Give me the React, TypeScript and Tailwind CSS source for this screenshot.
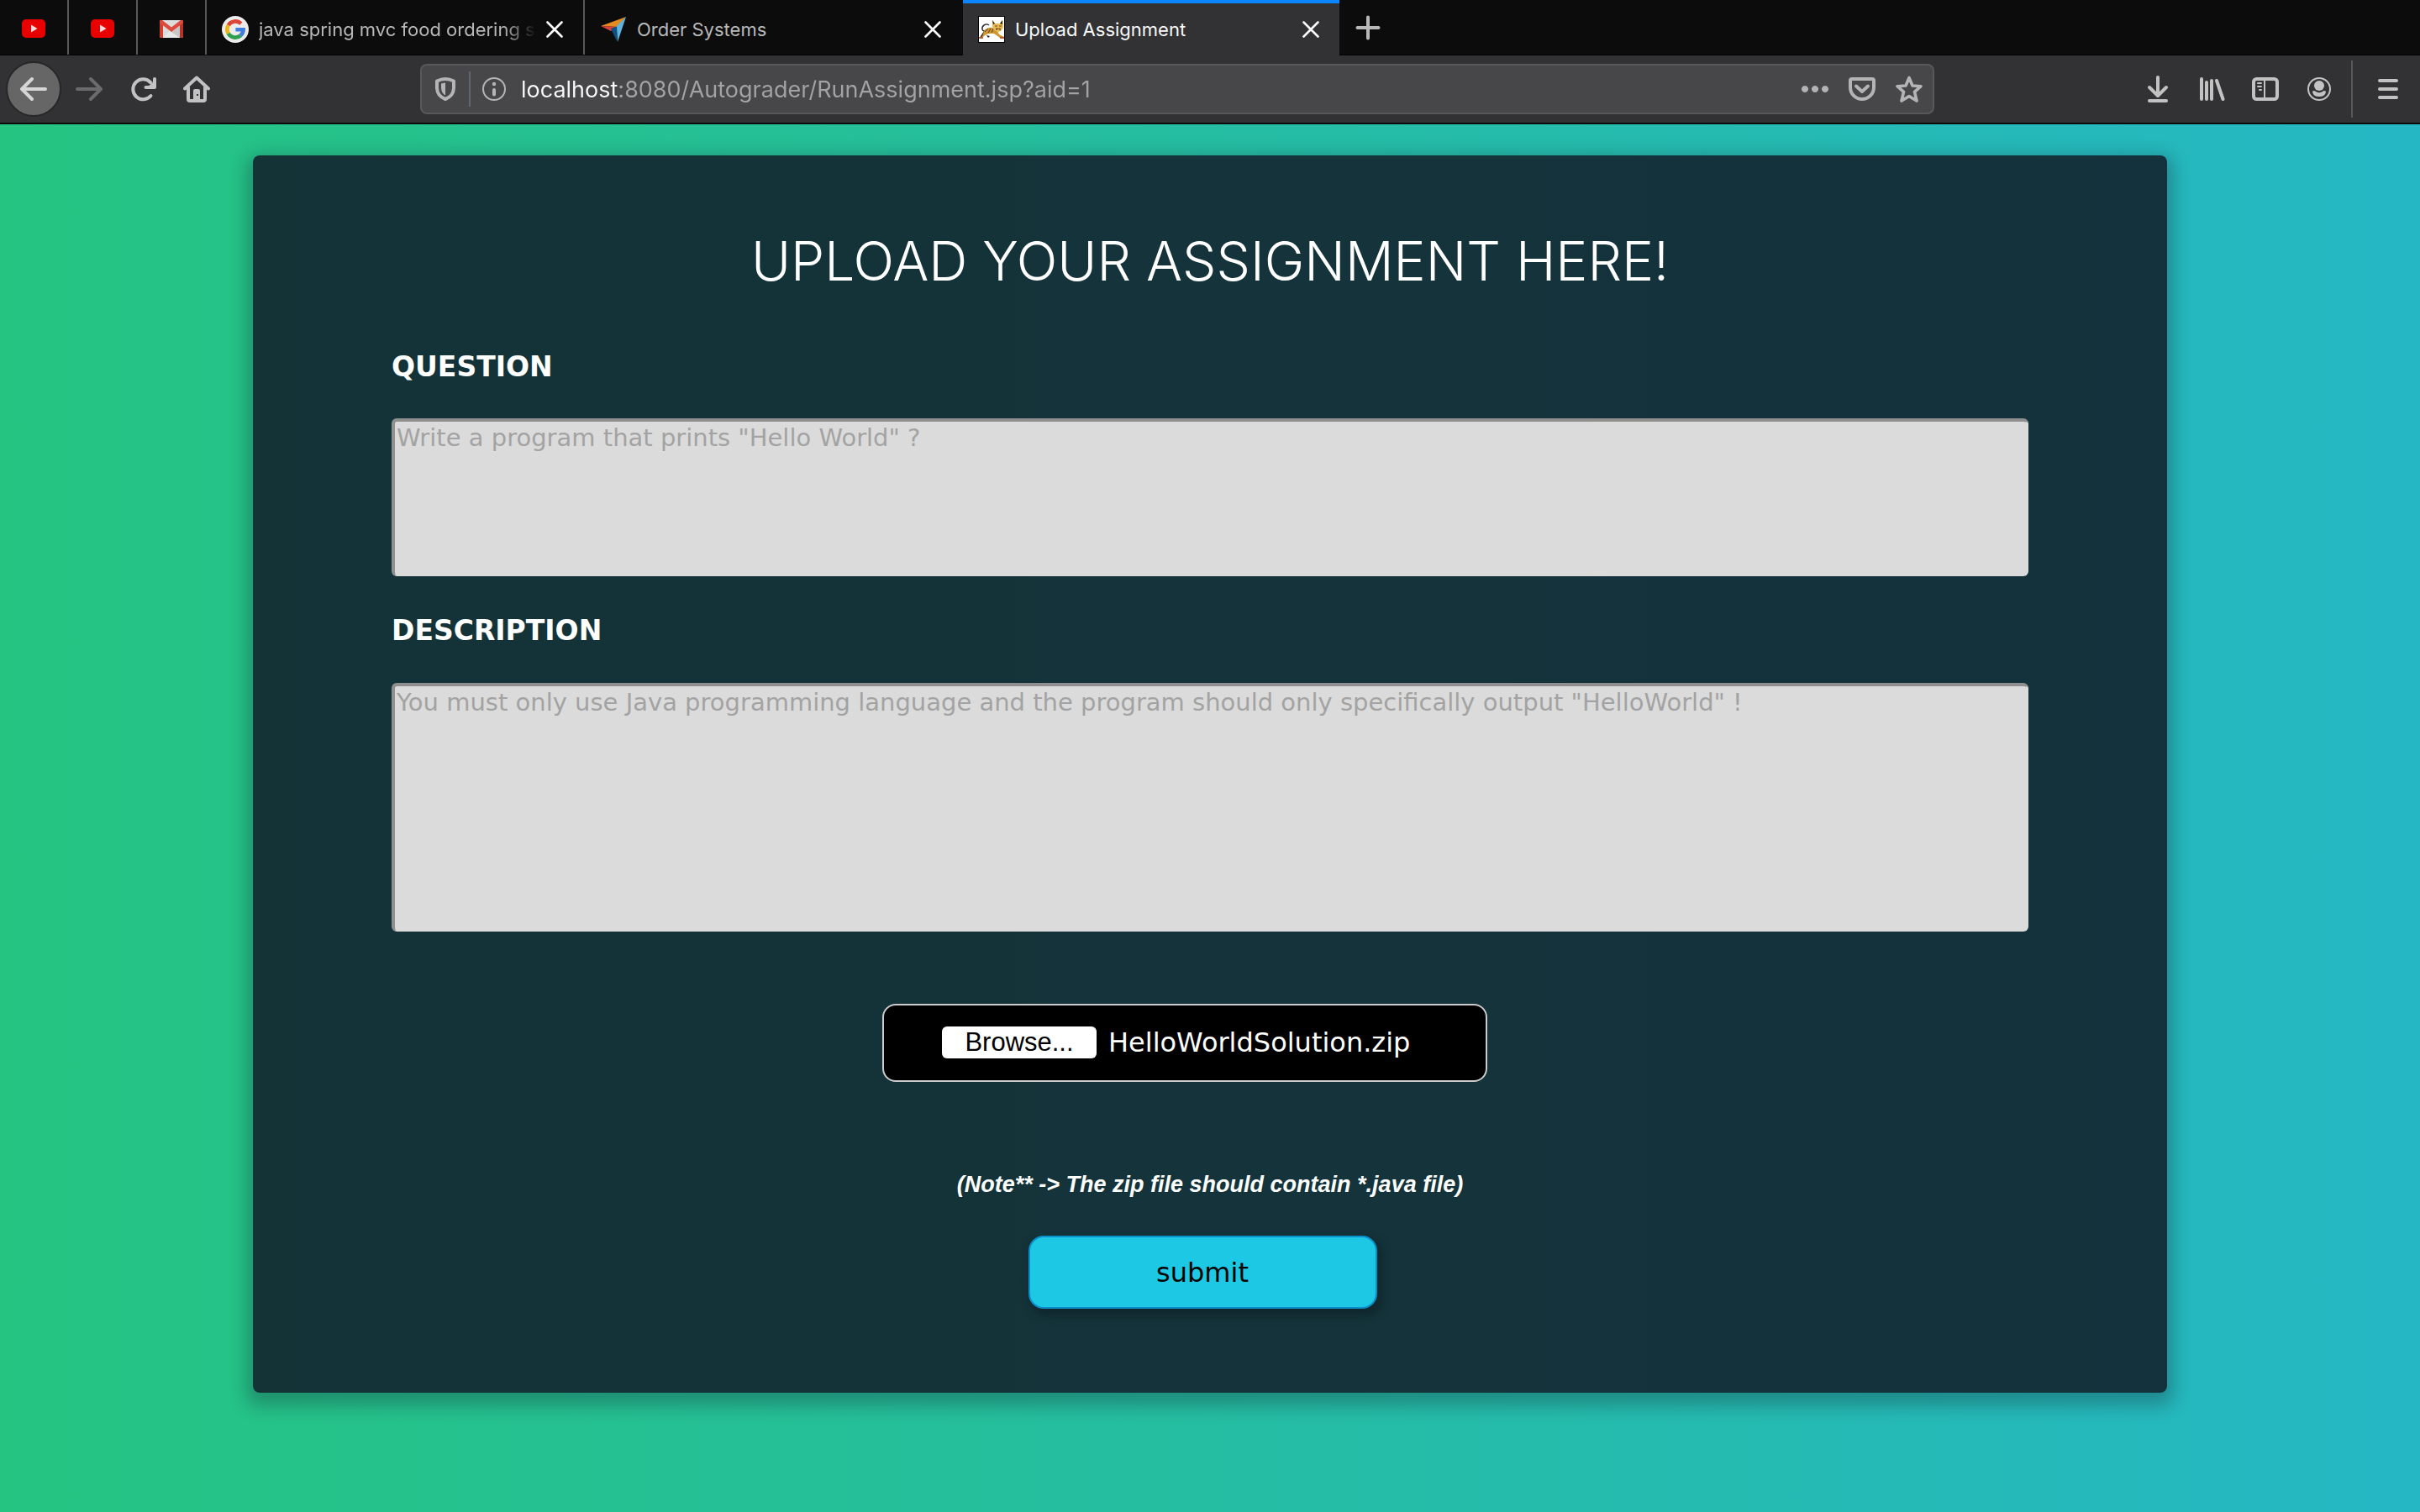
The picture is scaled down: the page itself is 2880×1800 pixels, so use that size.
import { useRef, useState } from "react";
import type { ReactNode } from "react";

function Icon({ children, className = "" }: { children: ReactNode; className?: string }) {
  return (
    <svg
      viewBox="0 0 32 32"
      className={`size-8 shrink-0 ${className}`}
      fill="none"
      stroke="currentColor"
      strokeWidth="4"
      strokeLinecap="round"
      strokeLinejoin="round"
      aria-hidden="true"
    >
      {children}
    </svg>
  );
}

function YouTubeIcon() {
  return (
    <svg viewBox="0 0 28 22" className="h-[22px] w-7" aria-hidden="true">
      <rect width="28" height="22" rx="5" fill="#e80000" />
      <path d="M11 6.5 18.5 11 11 15.5Z" fill="#f4dede" />
    </svg>
  );
}

function GmailIcon() {
  return (
    <svg viewBox="0 0 28 22" className="h-[22px] w-7" aria-hidden="true">
      <rect x="0" y="1" width="28" height="21" rx="2" fill="#dcdcdc" />
      <path d="M4 22 14 12 24 22Z" fill="#e9e9e7" />
      <path d="M14 15 24 6V22Z" fill="#c9c7c5" />
      <path d="M0 3Q0 1 2 1L4 3V22H2Q0 22 0 20Z" fill="#d2402f" />
      <path d="M28 3Q28 1 26 1L24 3V22H26Q28 22 28 20Z" fill="#b3352a" />
      <path d="M0 3Q0 1 2 1H3L14 9.5 25 1H26Q28 1 28 3L27 5 14 15 1 5Z" fill="#dd4b3e" />
    </svg>
  );
}

function GoogleIcon() {
  return (
    <svg viewBox="0 0 32 32" className="size-8 shrink-0" fill="none" strokeWidth="4.6" aria-hidden="true">
      <circle cx="16" cy="16" r="16" fill="#ececec" />
      <path d="M22.8 9.2A9.6 9.6 0 0 0 7.7 11.2" stroke="#db4437" />
      <path d="M7.7 11.2a9.6 9.6 0 0 0 0 9.6" stroke="#eeb211" />
      <path d="M7.7 20.8a9.6 9.6 0 0 0 14.4 2.6" stroke="#2f9e4f" />
      <path d="M22.1 23.4A9.6 9.6 0 0 0 25.6 16.2H16.4" stroke="#3f7de0" />
    </svg>
  );
}

function OrderIcon() {
  return (
    <svg viewBox="0 0 32 32" className="size-8 shrink-0" aria-hidden="true">
      <path d="M31 1 1 12 20 13Z" fill="#e58a1f" />
      <path d="M1 12 20 13 13 18Z" fill="#d9413a" />
      <path d="M13 15 21 12 20 30Z" fill="#0d4f80" />
      <path d="M31 1 20 12 21 31Z" fill="#5fb4de" />
    </svg>
  );
}

function TomcatIcon() {
  return (
    <svg viewBox="0 0 32 32" className="size-8 shrink-0" aria-hidden="true">
      <rect x="0.5" y="0.5" width="31" height="31" fill="#fff" stroke="#000" />
      <path d="M13 11C9 8 4 12 5 16Q6 19 10 17" fill="none" stroke="#222" strokeWidth="1.4" />
      <path d="M2 26 7 18Q11 13 17 14L23 18 25 22 31 25V27L26 26 19 21Q13 20 8 23L4 27Z" fill="#cf9630" />
      <path d="M8 19 12 15M12 20 15 15M16 20 18 15" stroke="#5e431b" strokeWidth="1" />
      <path d="M10 23 14 24 12 26ZM2 26 7 18 5 24Z" fill="#1c1c1c" />
      <path d="M17 5 20 9H26L29 5 30 13Q29 18 24 19 18 18 17 12Z" fill="#e9b953" />
      <path d="M17 5 20 9 18 10ZM29 5 26 9 29 10Z" fill="#2a2113" />
      <path d="M20 12H23M25 12H28M21 16 24 15 27 17M22 14V17M26 14V16" stroke="#6b4d1c" strokeWidth="1" fill="none" />
      <path d="M1 26 6 26M26 26H31" stroke="#a5472d" strokeWidth="1.5" />
    </svg>
  );
}

function CloseButton() {
  return (
    <button type="button" aria-label="Close tab" className="shrink-0 text-[#f9f9fa]">
      <svg viewBox="0 0 20 20" className="size-5" stroke="currentColor" strokeWidth="2.6" strokeLinecap="round" aria-hidden="true">
        <path d="M1.5 1.5 18.5 18.5M18.5 1.5 1.5 18.5" />
      </svg>
    </button>
  );
}

function PinnedTab({ label, children }: { label: string; children: ReactNode }) {
  return (
    <button
      type="button"
      aria-label={label}
      className="flex w-[82px] shrink-0 items-center justify-center border-r-2 border-[#58585a] pt-0.5"
    >
      {children}
    </button>
  );
}

function Tab({ title, icon, active = false, fade = false }: { title: string; icon: ReactNode; active?: boolean; fade?: boolean }) {
  return (
    <div
      className={
        active
          ? "flex w-[448px] items-center gap-3 border-t-4 border-[#0a84ff] bg-[#323234] pr-6 pl-[18px] text-[#f9f9fa]"
          : fade
            ? "flex w-[450px] items-center gap-3 border-r-2 border-[#58585a] pt-1 pr-6 pl-[18px] text-[#b8b8b9]"
            : "flex w-[450px] items-center gap-3 pt-1 pr-[26px] pl-[18px] text-[#b8b8b9]"
      }
    >
      {icon}
      <span
        className={
          fade
            ? "min-w-0 flex-1 overflow-hidden whitespace-nowrap [mask-image:linear-gradient(to_right,#000_88%,transparent)]"
            : "min-w-0 flex-1 overflow-hidden whitespace-nowrap"
        }
      >
        {title}
      </span>
      <CloseButton />
    </div>
  );
}

function ToolButton({ label, children, className = "" }: { label: string; children: ReactNode; className?: string }) {
  return (
    <button type="button" aria-label={label} className={`shrink-0 ${className}`}>
      <Icon>{children}</Icon>
    </button>
  );
}

function TabStrip() {
  return (
    <div className="flex h-[66px] border-b border-black bg-[#0c0c0d] text-[22px] leading-7">
      <PinnedTab label="YouTube"><YouTubeIcon /></PinnedTab>
      <PinnedTab label="YouTube"><YouTubeIcon /></PinnedTab>
      <PinnedTab label="Gmail"><GmailIcon /></PinnedTab>
      <Tab title="java spring mvc food ordering system" icon={<GoogleIcon />} fade />
      <Tab title="Order Systems" icon={<OrderIcon />} />
      <div className="-mb-px flex">
        <Tab title="Upload Assignment" icon={<TomcatIcon />} active />
      </div>
      <button type="button" aria-label="New tab" className="ml-[18px] text-[#b8b8b9]">
        <Icon><path d="M16 3.5V28.5M3.5 16H28.5" strokeWidth="4" /></Icon>
      </button>
    </div>
  );
}

function Toolbar() {
  const [url, setUrl] = useState("localhost:8080/Autograder/RunAssignment.jsp?aid=1");
  return (
    <div className="flex h-[82px] items-center border-b-2 border-[#0c0c0d] bg-[#323234] pr-[22px] pl-[7px] text-[#c2c2c3]">
      <button
        type="button"
        aria-label="Back"
        className="flex size-[66px] shrink-0 items-center justify-center rounded-full border-2 border-[#272728] bg-[#666667] text-[#d6d6d6]"
      >
        <Icon><path d="M2 16H30M14 4 2 16 14 28" /></Icon>
      </button>
      <ToolButton label="Forward" className="ml-[17px] text-[#6b6b6d]">
        <path d="M30 16H2M18 4 30 16 18 28" />
      </ToolButton>
      <ToolButton label="Reload" className="ml-8">
        <path d="M25.5 24A12 12 0 1 1 25 8" />
        <path d="M30 4V14H19.5" />
        <path d="M30 6V14H22Z" fill="currentColor" strokeWidth="1" />
      </ToolButton>
      <ToolButton label="Home" className="ml-8">
        <path d="M2 15.5 16 2.5 30 15.5M6 14V28Q6 30 8 30H24Q26 30 26 28V14" />
        <path d="M12 30V18Q12 16 14 16H18Q20 16 20 18V30Z" fill="currentColor" stroke="none" />
        <rect x="16" y="22" width="2" height="2" fill="#323234" stroke="none" />
      </ToolButton>

      <div className="mx-[250px] flex h-[60px] min-w-0 flex-1 items-center rounded-lg border-2 border-[#58585a] bg-[#474749] px-3 text-[#b4b4b5]">
        <Icon>
          <path d="M6 6.5Q16 1.5 26 6.5V15Q25.5 24.5 16 28 6.5 24.5 6 15Z" />
          <path d="M11 9.5 16 8.5V23.5Q11.5 21 11 15Z" fill="currentColor" stroke="none" />
        </Icon>
        <div className="mx-3 h-[42px] w-0.5 shrink-0 bg-[#5f6670]" />
        <Icon>
          <circle cx="16" cy="16" r="13" strokeWidth="2" />
          <circle cx="16" cy="10" r="2.2" fill="currentColor" stroke="none" />
          <path d="M16 17V22.5" />
        </Icon>
        <input
          aria-label="Address"
          value={url}
          onChange={(e) => setUrl(e.target.value)}
          className="mx-4 min-w-0 flex-1 bg-[linear-gradient(to_right,#f9f9fa_116px,#a3a3a4_116px)] bg-clip-text pt-0.5 text-[27px] leading-9 text-transparent caret-white outline-none"
        />
        <div className="flex gap-6">
          <ToolButton label="Page actions">
            <path d="M4 12a4 4 0 1 0 .01 0M16 12a4 4 0 1 0 .01 0M28 12a4 4 0 1 0 .01 0" fill="currentColor" stroke="none" />
          </ToolButton>
          <ToolButton label="Save to Pocket">
            <path d="M4 4H28Q30 4 30 6V14A14 14 0 0 1 2 14V6Q2 4 4 4Z" />
            <path d="M9 12.5 16 19 23 12.5" />
          </ToolButton>
          <ToolButton label="Bookmark">
            <path d="M16 2.5 20 12 30 12.7 22.5 19.3 25 30 16 24.5 7 30 9.5 19.3 2 12.7 12 12Z" strokeWidth="3.6" />
          </ToolButton>
        </div>
      </div>

      <div className="flex shrink-0 gap-8">
        <ToolButton label="Downloads">
          <path d="M16 2V23M6 14 16 24 26 14M6 30H26" />
        </ToolButton>
        <ToolButton label="Library">
          <path d="M4 4V28M10 8V28M16 6V28M22 6 29.5 28" />
        </ToolButton>
        <ToolButton label="Sidebar">
          <rect x="2" y="4" width="28" height="24" rx="3.5" />
          <path d="M15 4V28M7 9H11M7 13H11M9 17H11" strokeWidth="2" />
        </ToolButton>
        <ToolButton label="Account">
          <circle cx="16" cy="16" r="13" strokeWidth="2" />
          <circle cx="16" cy="12" r="6" fill="currentColor" stroke="none" />
          <path d="M8 19.5Q8 18 9.5 18 11 18 12 19 16 21.5 20 19 21 18 22.5 18 24 18 24 19.5 23 25 16 25 9 25 8 19.5Z" fill="currentColor" stroke="none" />
        </ToolButton>
      </div>
      <div className="mx-[22px] h-[68px] w-0.5 shrink-0 bg-[#58585a]" />
      <ToolButton label="Menu" className="ml-1">
        <path d="M6 6H26M6 16H26M6 26H26" />
      </ToolButton>
    </div>
  );
}

const fieldClass =
  "block w-full resize-none rounded-[6px] border-t-4 border-l-4 border-[#8f8f8f] bg-[#dbdbdb] px-0.5 pt-px text-[29px] leading-9 text-[#a3a3a3] outline-none";

function UploadForm() {
  const fileRef = useRef<HTMLInputElement>(null);
  const [fileName, setFileName] = useState("HelloWorldSolution.zip");
  return (
    <form
      onSubmit={(e) => e.preventDefault()}
      className="mx-auto flex w-full max-w-[2278px] flex-col rounded-lg bg-[#13232f]/90 px-[165px] pt-[86px] pb-[100px] font-['DejaVu_Sans',sans-serif] text-white shadow-[0_8px_20px_8px_rgba(19,35,47,0.3)]"
    >
      <h1 className="text-center font-[Inter,sans-serif] text-[64px] leading-20 font-light">UPLOAD YOUR ASSIGNMENT HERE!</h1>

      <label htmlFor="question" className="mt-[66px] text-[33px] leading-10 font-bold">QUESTION</label>
      <textarea
        id="question"
        readOnly
        defaultValue={'Write a program that prints "Hello World" ?'}
        className={`mt-[41px] h-[188px] ${fieldClass}`}
      />

      <label htmlFor="description" className="mt-[45px] text-[33px] leading-10 font-bold">DESCRIPTION</label>
      <textarea
        id="description"
        readOnly
        defaultValue={'You must only use Java programming language and the program should only specifically output "HelloWorld" !'}
        className={`mt-[42px] h-[296px] ${fieldClass}`}
      />

      <div className="mt-[86px] mr-[60px] flex h-[93px] w-[720px] items-center gap-3.5 self-center rounded-2xl border-2 border-[#cccccc] bg-black pb-0.5 pl-[69px]">
        <input
          ref={fileRef}
          id="solution"
          type="file"
          aria-label="Solution archive"
          className="sr-only"
          onChange={(e) => setFileName(e.target.files?.[0]?.name ?? fileName)}
        />
        <button
          type="button"
          onClick={() => fileRef.current?.click()}
          className="h-[38px] w-[184px] rounded-[6px] bg-white font-['Liberation_Sans',sans-serif] text-[31px] leading-[38px] text-black"
        >
          Browse...
        </button>
        <output htmlFor="solution" className="text-[32px] leading-10">{fileName}</output>
      </div>

      <p className="mt-[106px] text-center font-['Liberation_Sans',sans-serif] text-[27px] leading-8 font-bold italic">
        (Note** -&gt; The zip file should contain *.java file)
      </p>

      <button
        type="submit"
        className="mt-[45px] mr-[18px] h-[87px] w-[415px] self-center rounded-[18px] border-2 border-[#0a8fcb] bg-[#1dc8e4] pt-px text-[32px] leading-10 text-black shadow-[4px_6px_12px_2px_rgba(0,0,0,0.25)]"
      >
        submit
      </button>
    </form>
  );
}

export default function App() {
  return (
    <div className="flex min-h-screen flex-col font-[Inter,sans-serif]">
      <header>
        <TabStrip />
        <Toolbar />
      </header>
      <main className="flex-1 bg-linear-to-r/srgb from-[#25c481] to-[#25b7c4] px-8 py-[37px]">
        <UploadForm />
      </main>
    </div>
  );
}
